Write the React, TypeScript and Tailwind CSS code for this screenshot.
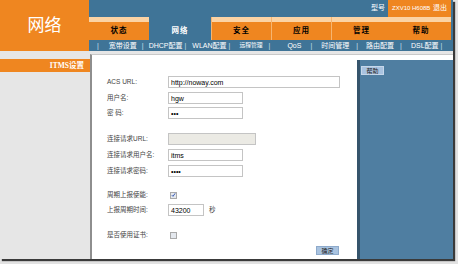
import React from "react";

const tabs = [
  { label: "状态", active: false },
  { label: "网络", active: true },
  { label: "安全", active: false },
  { label: "应用", active: false },
  { label: "管理", active: false },
  { label: "帮助", active: false },
];

function Sep({ className = "" }: { className?: string }) {
  return <span className={"text-[#cfe0ee] " + className}>|</span>;
}

function Field({ value, width, disabled }: { value?: string; width: string; disabled?: boolean }) {
  return (
    <div
      className={`${width} h-[12px] border border-[#c4c4c4] flex items-center px-[2px] text-[7px] text-black leading-none ${
        disabled ? "bg-[#ebeae4]" : "bg-white"
      }`}
    >
      {value}
    </div>
  );
}

function Row({ label, children, mt }: { label: string; children: React.ReactNode; mt: string }) {
  return (
    <div className={`flex items-center h-[12px] ${mt}`}>
      <span className="w-[61px] text-[6.5px] text-[#444] whitespace-nowrap">{label}</span>
      {children}
    </div>
  );
}

function Check({ checked }: { checked?: boolean }) {
  return (
    <span className="ml-[2px] w-[7px] h-[7px] border border-[#a9a9a9] bg-[#e4e8ee] flex items-center justify-center">
      {checked && (
        <svg width="6" height="6" viewBox="0 0 6 6">
          <path d="M1 3.2 L2.4 4.6 L5 1" stroke="#2a4fb0" strokeWidth="1.1" fill="none" />
        </svg>
      )}
    </span>
  );
}

export default function App() {
  return (
    <div className="w-[458px] h-[264px] bg-[#e2e2e2] font-['Liberation_Sans','Noto_Sans_CJK_SC',sans-serif] overflow-hidden">
      <div className="w-[453px] h-[259px] flex flex-col bg-[#e6e6e6] shadow-[2px_2px_1px_#3a3a3a]">
        {/* header */}
        <div className="flex h-[51px]">
          <div className="w-[91px] bg-[#ef8620] flex items-center justify-center pb-[4px]">
            <span className="text-white text-[17px] font-['Noto_Sans_CJK_SC',sans-serif] leading-none">网络</span>
          </div>
          <div className="flex-1 bg-[#3f7497] flex flex-col">
            <div className="h-[17px] flex justify-end items-center">
              <span className="text-white text-[7px] mr-[3px]">型号</span>
              <div className="w-[63px] h-full bg-[#ef8620] flex items-center justify-between px-[4px] text-white">
                <span className="text-[6px]">ZXV10 H608B</span>
                <span className="text-[7px]">退出</span>
              </div>
              <div className="w-[2px]" />
            </div>
            <div className="h-[23px] flex pr-[2px]">
              {tabs.map((t, i) => (
                <div
                  key={t.label}
                  className={`${i === 1 ? "w-[62px]" : "w-[60px]"} flex flex-col ${
                    t.active ? "bg-[#3f7497]" : "bg-[#ef8620]"
                  } ${i > 1 && i < 5 ? "border-l border-[#f6b570]" : ""}`}
                >
                  <div className={`h-[5px] ${t.active ? "" : "bg-[#fbd3a4]"}`} />
                  <div
                    className={`flex-1 flex items-center justify-center text-[7.5px] font-bold tracking-[1px] ${
                      t.active ? "text-white" : "text-black"
                    }`}
                  >
                    {t.label}
                  </div>
                </div>
              ))}
              <div className="flex-1 bg-[#ef8620]" />
            </div>
            <div className="h-[11px] flex items-center text-[7px] text-white leading-none whitespace-nowrap">
              <Sep className="ml-[8px]" />
              <span className="ml-[10px]">宽带设置</span>
              <Sep className="ml-[5px]" />
              <span className="ml-[5px]">DHCP配置</span>
              <Sep className="ml-[2px]" />
              <span className="ml-[6px]">WLAN配置</span>
              <Sep className="ml-[2px]" />
              <span className="ml-[9px] text-[5.8px]">远程管理</span>
              <Sep className="ml-[6px]" />
              <span className="ml-[17px]">QoS</span>
              <Sep className="ml-[9px]" />
              <span className="ml-[9px]">时间管理</span>
              <Sep className="ml-[7px]" />
              <span className="ml-[8px]">路由配置</span>
              <Sep className="ml-[6px]" />
              <span className="ml-[9px]">DSL配置</span>
              <Sep className="ml-[2px]" />
            </div>
          </div>
        </div>

        {/* body */}
        <div className="flex flex-1">
          <div className="w-[90px] pt-[8px]">
            <div className="h-[13px] bg-[#ef8620] flex items-center justify-end pr-[6px]">
              <span className="text-white text-[7.5px] font-bold font-['Liberation_Serif','Noto_Sans_CJK_SC',serif]">ITMS设置</span>
            </div>
          </div>
          <div className="flex-1 flex mt-[3px] bg-white border-l-2 border-t border-l-[#8e8e8e] border-t-[#c9c9c9]">
            <div className="w-[265px] pl-[15px] pt-[21px] flex flex-col">
              <Row label="ACS URL:" mt="">
                <Field value="http://noway.com" width="w-[172px]" />
              </Row>
              <Row label="用户名:" mt="mt-[4px]">
                <Field value="hgw" width="w-[75px]" />
              </Row>
              <Row label="密    码:" mt="mt-[3px]">
                <Field value="•••" width="w-[75px]" />
              </Row>
              <Row label="连接请求URL:" mt="mt-[14px]">
                <Field width="w-[88px]" disabled />
              </Row>
              <Row label="连接请求用户名:" mt="mt-[4px]">
                <Field value="itms" width="w-[75px]" />
              </Row>
              <Row label="连接请求密码:" mt="mt-[4px]">
                <Field value="••••" width="w-[75px]" />
              </Row>
              <Row label="周期上报使能:" mt="mt-[12px]">
                <Check checked />
              </Row>
              <Row label="上报周期时间:" mt="mt-[3px]">
                <Field value="43200" width="w-[36px]" />
                <span className="ml-[5px] text-[6.5px] text-[#444]">秒</span>
              </Row>
              <Row label="是否使用证书:" mt="mt-[13px]">
                <Check />
              </Row>
              <div className="flex justify-end mt-[5px] pr-[18px]">
                <button className="w-[23px] h-[9px] bg-[#a9c3e0] border border-[#8eaacb] text-[6px] text-[#222] leading-none flex items-center justify-center">
                  确定
                </button>
              </div>
            </div>
            <div className="flex-1 mt-[5px] bg-[#4f7ea1] border-l-[3px] border-l-[#35546c] pt-[6px] pl-[1px]">
              <div className="w-[23px] h-[9px] bg-[#a9c3e0] border border-[#c6d7ea] text-[6px] text-[#222] flex items-center justify-center leading-none">
                帮助
              </div>
            </div>
          </div>
        </div>
      </div>
    </div>
  );
}
